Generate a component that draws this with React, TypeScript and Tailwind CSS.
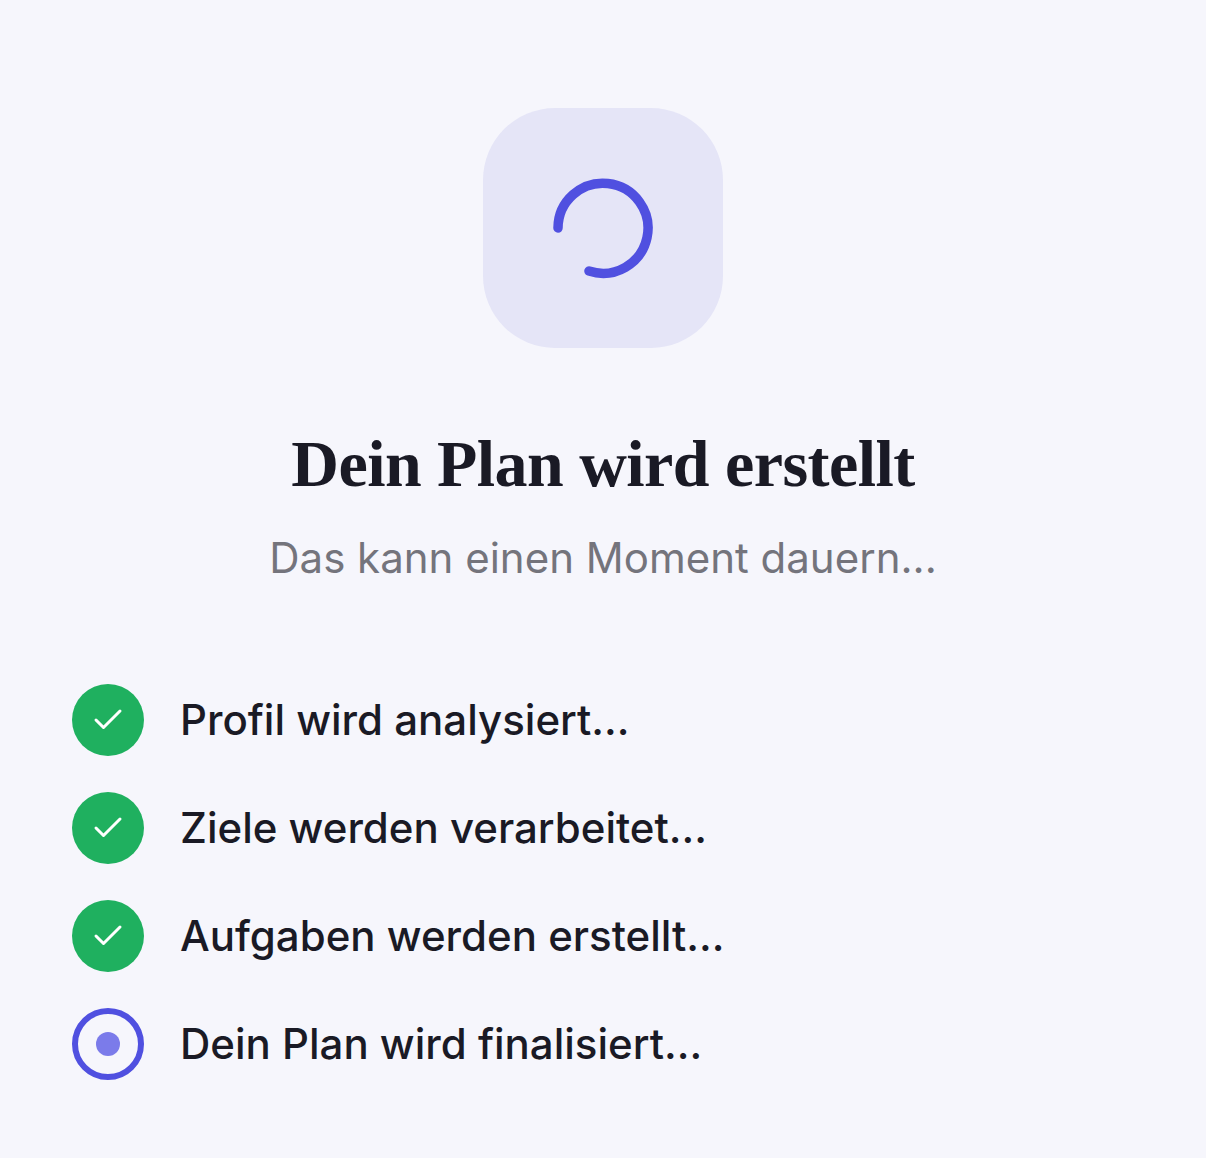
import { Check } from "lucide-react";

const steps = [
  { label: "Profil wird analysiert...", done: true },
  { label: "Ziele werden verarbeitet...", done: true },
  { label: "Aufgaben werden erstellt...", done: true },
  { label: "Dein Plan wird finalisiert...", done: false },
];

export default function App() {
  return (
    <div className="min-h-[1158px] bg-[#f6f6fc] px-[72px] pt-[108px] font-['Inter',sans-serif]">
      {/* Spinner */}
      <div className="mx-auto flex h-[240px] w-[240px] items-center justify-center rounded-[72px] bg-[#e5e5f7]">
        <svg width="108" height="108" viewBox="0 0 108 108" fill="none">
          <path
            d="M 9 54 A 45 45 0 1 1 40 97"
            stroke="#5050e0"
            strokeWidth="9.5"
            strokeLinecap="round"
          />
        </svg>
      </div>

      {/* Titre */}
      <h1 className="mt-[80px] text-center font-['Liberation_Serif',serif] text-[66px] leading-[72px] font-bold tracking-[-0.55px] text-[#1a1a25]">
        Dein Plan wird erstellt
      </h1>
      <p className="mt-[32px] text-center text-[42px] leading-[52px] text-[#74747c]">
        Das kann einen Moment dauern...
      </p>

      {/* Etapes */}
      <div className="mt-[100px] flex flex-col gap-9">
        {steps.map((step) => (
          <div key={step.label} className="flex items-center gap-9">
            {step.done ? (
              <div className="flex h-[72px] w-[72px] items-center justify-center rounded-full bg-[#1fb05f]">
                <Check size={36} strokeWidth={2} className="text-white" />
              </div>
            ) : (
              <div className="flex h-[72px] w-[72px] items-center justify-center rounded-full border-[6px] border-[#5050e0]">
                <div className="h-6 w-6 rounded-full bg-[#7b7bea]" />
              </div>
            )}
            <span className="text-[42px] leading-[52px] font-medium text-[#1a1a25]">{step.label}</span>
          </div>
        ))}
      </div>
    </div>
  );
}
